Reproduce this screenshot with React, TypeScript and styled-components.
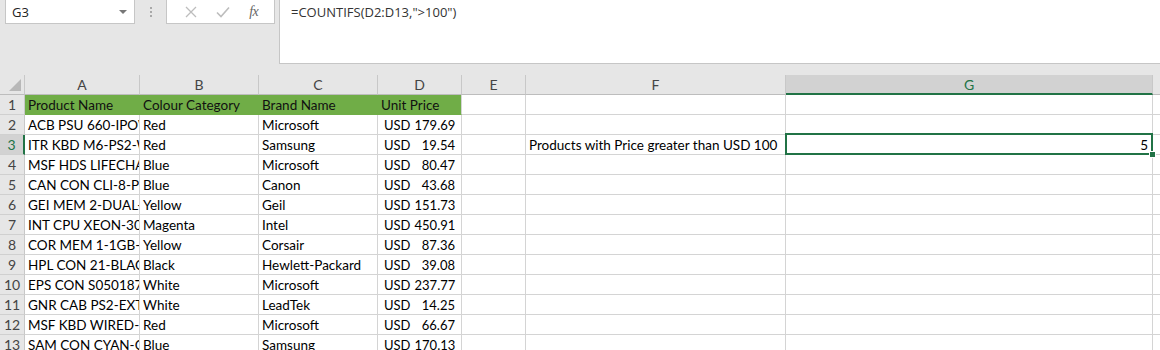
import React from "react";
import styled, { createGlobalStyle } from "styled-components";

const GlobalStyle = createGlobalStyle`
  html, body {
    margin: 0;
    padding: 0;
    background: #ffffff;
    overflow: hidden;
  }
  * { box-sizing: border-box; }
`;

const green = "#217346";
const grid = "#d4d4d4";
const chrome = "#e6e6e6";

const Page = styled.div`
  width: 1160px;
  height: 350px;
  overflow: hidden;
  font-family: Lato, "Liberation Sans", sans-serif;
`;

const TopBar = styled.div`
  height: 75px;
  background: ${chrome};
  display: flex;
  align-items: flex-start;
  padding-left: 5px;
`;

const NameBox = styled.div`
  width: 130px;
  height: 24px;
  background: #fff;
  border: 1px solid #c6c6c6;
  border-top: none;
  display: flex;
  align-items: center;
  justify-content: space-between;
  padding: 0 6px 0 6px;
  font-family: "Open Sans", sans-serif;
  font-size: 13px;
  color: #222;
`;

const Caret = styled.span`
  width: 0;
  height: 0;
  border-left: 4px solid transparent;
  border-right: 4px solid transparent;
  border-top: 4px solid #777;
  margin-right: 1px;
`;

const Grip = styled.div`
  width: 31px;
  height: 24px;
  display: flex;
  flex-direction: column;
  align-items: center;
  justify-content: center;
  gap: 2px;
  span {
    width: 2px;
    height: 2px;
    background: #a8a8a8;
  }
`;

const FnButtons = styled.div`
  width: 109px;
  height: 24px;
  background: #fff;
  border: 1px solid #c6c6c6;
  border-top: none;
  display: flex;
  align-items: center;
  justify-content: space-around;
  padding: 0 6px 0 8px;
`;

const FxLabel = styled.span`
  font-family: "Liberation Serif", serif;
  font-style: italic;
  font-size: 14px;
  color: #666;
  letter-spacing: -0.5px;
`;

const FormulaBar = styled.div`
  flex: 1;
  height: 64px;
  margin-left: 4px;
  background: #fff;
  border-left: 1px solid #c6c6c6;
  border-bottom: 1px solid #c6c6c6;
  padding: 3px 11px;
  font-family: "Open Sans", sans-serif;
  font-size: 13px;
  color: #333;
`;

const Sheet = styled.div`
  display: grid;
  grid-template-columns: 25px 115px 119px 119px 84px 64px 260px 367px 64px;
  grid-auto-rows: 20px;
  font-size: 13.5px;
`;

const Corner = styled.div`
  background: ${chrome};
  border-right: 1px solid #c8c8c8;
  border-bottom: 1px solid #bdbdbd;
  position: relative;
  &::after {
    content: "";
    position: absolute;
    right: 3px;
    bottom: 3px;
    border-left: 12px solid transparent;
    border-bottom: 12px solid #b8b8b8;
  }
`;

const ColHead = styled.div<{ $active?: boolean }>`
  background: ${(p) => (p.$active ? "#d2d2d2" : chrome)};
  color: ${(p) => (p.$active ? green : "#444")};
  border-right: 1px solid #c8c8c8;
  border-bottom: ${(p) => (p.$active ? `2px solid ${green}` : "1px solid #bdbdbd")};
  display: flex;
  align-items: center;
  justify-content: center;
  font-size: 14px;
  padding-top: ${(p) => (p.$active ? "1px" : "0")};
`;

const RowHead = styled.div<{ $active?: boolean }>`
  background: ${(p) => (p.$active ? "#d2d2d2" : chrome)};
  color: ${(p) => (p.$active ? green : "#444")};
  border-right: ${(p) => (p.$active ? `2px solid ${green}` : "1px solid #c8c8c8")};
  border-bottom: 1px solid #d0d0d0;
  display: flex;
  align-items: center;
  justify-content: center;
  font-size: 14px;
  line-height: 19px;
`;

const Cell = styled.div<{ $fill?: boolean; $right?: boolean }>`
  background: ${(p) => (p.$fill ? "#70ad47" : "#fff")};
  color: ${(p) => (p.$fill ? "#111" : "#000")};
  border-right: 1px solid ${(p) => (p.$fill ? "#70ad47" : grid)};
  border-bottom: 1px solid ${(p) => (p.$fill ? "#70ad47" : grid)};
  padding: 1px 3px 0;
  white-space: nowrap;
  overflow: hidden;
  line-height: 18px;
  text-align: ${(p) => (p.$right ? "right" : "left")};
`;

const LastFillCell = styled(Cell)`
  border-right-color: ${grid};
`;

const MoneyCell = styled(Cell)`
  display: flex;
  justify-content: space-between;
  gap: 4px;
  padding: 1px 6px 0 6px;
  font-size: 13px;
`;

const SelectedCell = styled(Cell)`
  position: relative;
  overflow: visible;
  padding-right: 4px;
  &::after {
    content: "";
    position: absolute;
    top: -2px;
    left: -1px;
    right: -1px;
    bottom: -1px;
    border: 2px solid ${green};
    pointer-events: none;
  }
`;

const FillHandle = styled.span`
  position: absolute;
  right: -4px;
  bottom: -4px;
  width: 7px;
  height: 7px;
  background: ${green};
  border: 1px solid #fff;
  z-index: 2;
`;

const columns = ["A", "B", "C", "D", "E", "F", "G", ""];

const rows: [string, string, string, string][] = [
  ["ACB PSU 660-IPOWER", "Red", "Microsoft", "179.69"],
  ["ITR KBD M6-PS2-WHITE", "Red", "Samsung", "19.54"],
  ["MSF HDS LIFECHAT-LX3000", "Blue", "Microsoft", "80.47"],
  ["CAN CON CLI-8-Photo Cyan", "Blue", "Canon", "43.68"],
  ["GEI MEM 2-DUAL-2GB", "Yellow", "Geil", "151.73"],
  ["INT CPU XEON-3040", "Magenta", "Intel", "450.91"],
  ["COR MEM 1-1GB-VALUE", "Yellow", "Corsair", "87.36"],
  ["HPL CON 21-BLACK", "Black", "Hewlett-Packard", "39.08"],
  ["EPS CON S050187", "White", "Microsoft", "237.77"],
  ["GNR CAB PS2-EXT-CABLE", "White", "LeadTek", "14.25"],
  ["MSF KBD WIRED-DESKTOP", "Red", "Microsoft", "66.67"],
  ["SAM CON CYAN-CLP", "Blue", "Samsung", "170.13"],
];

export default function App() {
  return (
    <Page>
      <GlobalStyle />
      <TopBar>
        <NameBox>
          <span>G3</span>
          <Caret />
        </NameBox>
        <Grip>
          <span />
          <span />
          <span />
        </Grip>
        <FnButtons>
          <svg width="12" height="12" viewBox="0 0 12 12">
            <path d="M1 1L11 11M11 1L1 11" stroke="#bdbdbd" strokeWidth="1.3" />
          </svg>
          <svg width="14" height="12" viewBox="0 0 14 12">
            <path d="M1 6.5L5 10.5L13 1.5" stroke="#bdbdbd" strokeWidth="1.6" fill="none" />
          </svg>
          <FxLabel>fx</FxLabel>
        </FnButtons>
        <FormulaBar>=COUNTIFS(D2:D13,"&gt;100")</FormulaBar>
      </TopBar>

      <Sheet>
        <Corner />
        {columns.map((c, i) => (
          <ColHead key={i} $active={c === "G"}>
            {c}
          </ColHead>
        ))}

        <RowHead>1</RowHead>
        <Cell $fill>Product Name</Cell>
        <Cell $fill>Colour Category</Cell>
        <Cell $fill>Brand Name</Cell>
        <LastFillCell $fill>Unit Price</LastFillCell>
        <Cell />
        <Cell />
        <Cell />
        <Cell />

        {rows.map(([name, colour, brand, price], i) => {
          const n = i + 2;
          return (
            <React.Fragment key={n}>
              <RowHead $active={n === 3}>{n}</RowHead>
              <Cell>{name}</Cell>
              <Cell>{colour}</Cell>
              <Cell>{brand}</Cell>
              <MoneyCell>
                <span>USD</span>
                <span>{price}</span>
              </MoneyCell>
              <Cell />
              <Cell>{n === 3 ? "Products with Price greater than USD 100" : ""}</Cell>
              {n === 3 ? (
                <SelectedCell $right>
                  5
                  <FillHandle />
                </SelectedCell>
              ) : (
                <Cell />
              )}
              <Cell />
            </React.Fragment>
          );
        })}
      </Sheet>
    </Page>
  );
}
